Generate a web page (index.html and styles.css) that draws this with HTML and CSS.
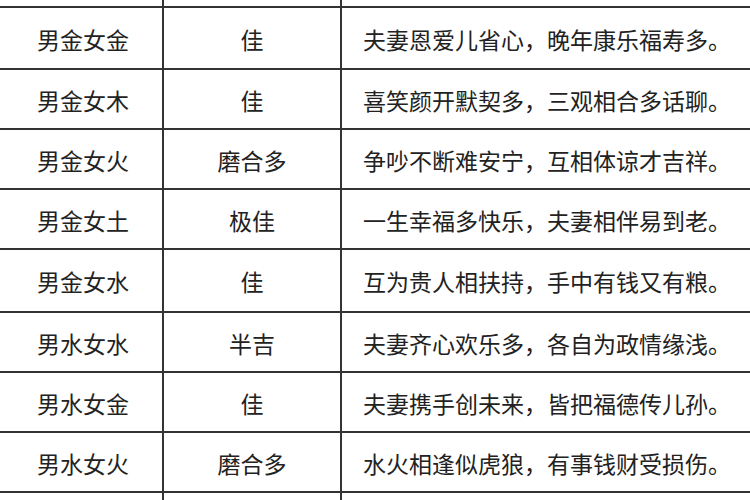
FILE: index.html
```html
<!DOCTYPE html>
<html lang="zh-CN">
<head>
<meta charset="utf-8">
<link rel="stylesheet" href="styles.css">
</head>
<body>
<div class="table">
  <div class="row top"><div class="cell c1"></div><div class="cell c2"></div><div class="cell c3"></div></div>
  <div class="row first"><div class="cell c1">男金女金</div><div class="cell c2">佳</div><div class="cell c3">夫妻恩爱儿省心，晚年康乐福寿多。</div></div>
  <div class="row"><div class="cell c1">男金女木</div><div class="cell c2">佳</div><div class="cell c3">喜笑颜开默契多，三观相合多话聊。</div></div>
  <div class="row"><div class="cell c1">男金女火</div><div class="cell c2">磨合多</div><div class="cell c3">争吵不断难安宁，互相体谅才吉祥。</div></div>
  <div class="row"><div class="cell c1">男金女土</div><div class="cell c2">极佳</div><div class="cell c3">一生幸福多快乐，夫妻相伴易到老。</div></div>
  <div class="row mid"><div class="cell c1">男金女水</div><div class="cell c2">佳</div><div class="cell c3">互为贵人相扶持，手中有钱又有粮。</div></div>
  <div class="row"><div class="cell c1">男水女水</div><div class="cell c2">半吉</div><div class="cell c3">夫妻齐心欢乐多，各自为政情缘浅。</div></div>
  <div class="row"><div class="cell c1">男水女金</div><div class="cell c2">佳</div><div class="cell c3">夫妻携手创未来，皆把福德传儿孙。</div></div>
  <div class="row"><div class="cell c1">男水女火</div><div class="cell c2">磨合多</div><div class="cell c3">水火相逢似虎狼，有事钱财受损伤。</div></div>
  <div class="row bottom"><div class="cell c1"></div><div class="cell c2"></div><div class="cell c3"></div></div>
</div>
</body>
</html>
```
FILE: styles.css
```css
html, body {
  margin: 0;
  padding: 0;
  background: #ffffff;
  overflow: hidden;
}
body {
  width: 750px;
  height: 500px;
  font-family: "Noto Sans CJK SC", "Noto Sans", sans-serif;
  font-size: 23px;
  color: #222222;
}
.table {
  display: flex;
  flex-direction: column;
  width: 750px;
}
.row {
  display: flex;
  height: 58px;
  border-top: 2px solid #333333;
}
.row.top {
  height: 6px;
  border-top: none;
}
.row.first {
  height: 60px;
}
.row.mid {
  height: 61px;
}
.row.bottom {
  height: 20px;
}
.cell {
  display: flex;
  align-items: center;
  padding-top: 1px;
  box-sizing: border-box;
  white-space: nowrap;
}
.c1 {
  width: 164px;
  border-right: 2px solid #333333;
  justify-content: center;
  padding-left: 4px;
}
.c2 {
  width: 178px;
  border-right: 2px solid #333333;
  justify-content: center;
}
.c3 {
  flex: 1;
  padding-left: 21px;
}
```
